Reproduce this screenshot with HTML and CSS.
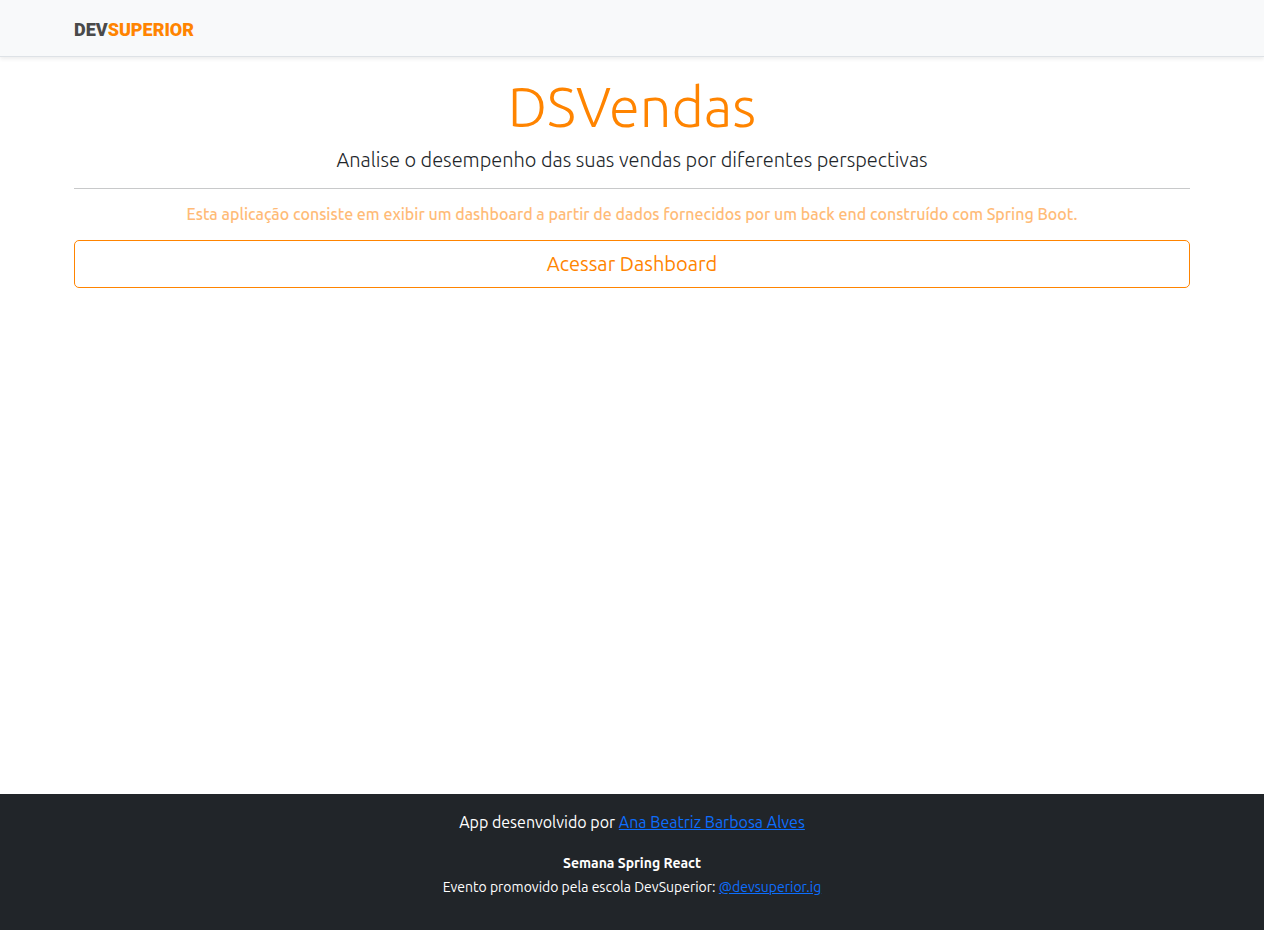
FILE: index.html
```html
<!DOCTYPE html>
<html lang="pt-BR">
<head>
<meta charset="utf-8">
<meta name="viewport" content="width=device-width, initial-scale=1">
<title>DSVendas</title>
<link rel="stylesheet" href="styles.css">
</head>
<body>
<header class="navbar">
  <div class="container">
    <a class="brand" href="#"><span class="brand-dev">DEV</span><span class="brand-superior">SUPERIOR</span></a>
  </div>
</header>
<main class="container hero">
  <h1 class="title">DSVendas</h1>
  <p class="lead">Analise o desempenho das suas vendas por diferentes perspectivas</p>
  <hr class="rule">
  <p class="about">Esta aplicação consiste em exibir um dashboard a partir de dados fornecidos por um back end construído com Spring Boot.</p>
  <a class="btn" href="#">Acessar Dashboard</a>
</main>
<footer class="footer">
  <p class="author">App desenvolvido por <a href="#">Ana Beatriz Barbosa Alves</a></p>
  <p class="event"><strong>Semana Spring React</strong></p>
  <p class="event">Evento promovido pela escola DevSuperior: <a href="#">@devsuperior.ig</a></p>
</footer>
</body>
</html>
```
FILE: styles.css
```css
* { box-sizing: border-box; }
body {
  margin: 0;
  min-height: 100vh;
  display: flex;
  flex-direction: column;
  font-family: Ubuntu, "Open Sans", "Noto Sans", sans-serif;
  font-size: 16px;
  line-height: 24px;
  color: #212529;
  background: #fff;
}
h1, p { margin: 0; }
.container {
  width: 100%;
  max-width: 1140px;
  margin: 0 auto;
  padding: 0 12px;
}
.navbar {
  padding: 18px 0 14px;
  background: #f8f9fa;
  border-bottom: 1px solid #dee2e6;
  box-shadow: 0 2px 4px rgba(0, 0, 0, 0.075);
}
.navbar .container { display: flex; }
.brand {
  font: 900 18px/24px Roboto, sans-serif;
  text-decoration: none;
}
.brand-dev { color: #4a4a4a; }
.brand-superior { color: #ff8400; }
.hero {
  flex: 1;
  display: flex;
  flex-direction: column;
  text-align: center;
  padding-top: 16px;
}
.title { font-size: 56px; line-height: 67px; font-weight: 300; color: #ff8400; margin-bottom: 5px; }
.lead { font-size: 20px; line-height: 30px; font-weight: 300; }
.rule { width: 100%; height: 1px; margin: 13px 0; border: 0; background: #c8c9ca; }
.about { font-weight: 500; color: #ffbb77; margin-bottom: 14px; }
.btn {
  padding: 8px 16px;
  border: 1px solid #ff8400;
  border-radius: 5px;
  color: #ff8400;
  font-size: 20px;
  line-height: 30px;
  text-decoration: none;
}
.footer {
  padding: 16px;
  min-height: 136px;
  background: #212529;
  color: #fff;
  text-align: center;
}
.footer a { color: #0d6efd; }
.author { margin-bottom: 17px; }
.event { font-size: 14px; }
```
